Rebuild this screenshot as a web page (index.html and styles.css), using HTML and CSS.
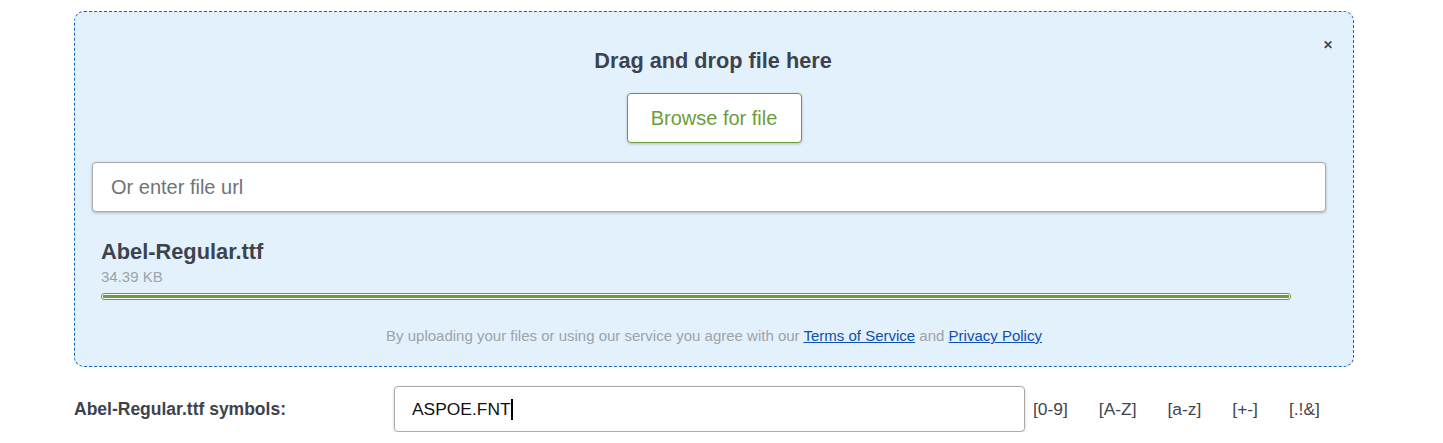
FILE: index.html
```html
<!DOCTYPE html>
<html>
<head>
<meta charset="utf-8">
<link rel="stylesheet" href="styles.css">
</head>
<body>
<div class="page">
  <div class="dropzone">
    <span class="close">&#x2715;</span>
    <div class="title">Drag and drop file here</div>
    <div class="browse-row"><button class="browse">Browse for file</button></div>
    <div class="url"><span class="placeholder">Or enter file url</span></div>
    <div class="file">
      <div class="fname">Abel-Regular.ttf</div>
      <div class="fsize">34.39 KB</div>
      <div class="bar"><div class="fill"></div></div>
    </div>
    <div class="terms">By uploading your files or using our service you agree with our <a href="#">Terms of Service</a> and <a href="#">Privacy Policy</a></div>
  </div>
  <div class="symbols">
    <div class="label">Abel-Regular.ttf symbols:</div>
    <div class="sym-input"><span class="val">ASPOE.FNT</span><span class="caret"></span></div>
    <div class="sets">
      <span>[0-9]</span><span>[A-Z]</span><span>[a-z]</span><span>[+-]</span><span>[.!&amp;]</span>
    </div>
  </div>
</div>
</body>
</html>
```

FILE: styles.css
```css
html, body { margin: 0; padding: 0; background: #fff; }
body { font-family: "Liberation Sans", Arial, sans-serif; }
.page { margin-left: 74px; width: 1280px; padding-top: 11px; }
.dropzone {
  position: relative;
  box-sizing: border-box;
  height: 356px;
  background: #e3f1fc;
  border: 1px dashed #1565c0;
  border-radius: 10px;
  padding: 36px 27px 0 17px;
}
.close {
  position: absolute;
  right: 20px;
  top: 26px;
  font-size: 12px;
  font-weight: bold;
  color: #3f4650;
}
.title {
  text-align: center;
  font-size: 21.7px;
  line-height: 26px;
  font-weight: bold;
  color: #3d434c;
  padding-left: 8px;
}
.browse-row { display: flex; justify-content: center; margin-top: 19px; padding-left: 10px; }
.browse {
  width: 175px;
  height: 50px;
  background: #fff;
  border: 1px solid #6a9e3a;
  border-radius: 4px;
  box-shadow: 0 1px 3px rgba(0,0,0,0.2);
  color: #6a9e3a;
  font-family: "Liberation Sans", Arial, sans-serif;
  font-size: 20px;
  padding: 0;
}
.url {
  margin-top: 19px;
  box-sizing: border-box;
  height: 50px;
  background: #fff;
  border: 1px solid #aaa;
  border-radius: 4px;
  box-shadow: 0 1px 3px rgba(0,0,0,0.25);
  display: flex;
  align-items: center;
  padding-left: 18px;
}
.placeholder { font-size: 20px; color: #6f747a; }
.file { padding-left: 9px; margin-top: 27px; }
.fname { font-size: 21.8px; line-height: 26px; font-weight: bold; color: #3d434c; }
.fsize { font-size: 15px; line-height: 17px; color: #9ea3a8; margin-top: 3px; }
.bar {
  margin-top: 8px;
  width: 1190px;
  height: 7px;
  box-sizing: border-box;
  border: 1px solid #6a9e3a;
  border-radius: 3px;
  padding: 1px;
  background: #fff;
}
.fill { height: 3px; background: #6a9e3a; }
.terms {
  margin-top: 27px;
  text-align: center;
  font-size: 15px;
  line-height: 18px;
  color: #9ea3a8;
  padding-left: 10px;
}
.terms a { color: #0d4fb0; text-decoration: underline; }
.symbols { display: flex; align-items: center; margin-top: 19px; }
.label { width: 320px; font-size: 17.5px; font-weight: bold; color: #3d434c; }
.sym-input {
  box-sizing: border-box;
  width: 631px;
  height: 46px;
  border: 1px solid #aaa;
  border-radius: 4px;
  box-shadow: 0 1px 3px rgba(0,0,0,0.2);
  display: flex;
  align-items: center;
  padding-left: 17px;
}
.val { font-size: 17.4px; color: #111; }
.caret { display: inline-block; width: 2px; height: 21px; background: #000; }
.sets { display: flex; gap: 31px; margin-left: 8px; font-size: 17.4px; color: #3f4650; }
```
